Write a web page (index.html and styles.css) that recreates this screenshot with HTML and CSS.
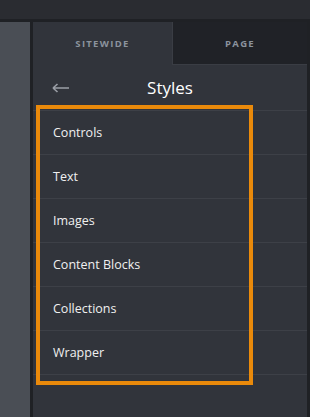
FILE: index.html
```html
<!DOCTYPE html>
<html lang="en">
<head>
  <meta charset="UTF-8">
  <meta name="viewport" content="width=device-width, initial-scale=1.0">
  <title>Styles</title>
  <link rel="stylesheet" href="styles.css">
</head>
<body>
  <div class="topbar"></div>
  <div class="main">
    <div class="side"></div>
    <div class="panel">
      <div class="tabs">
        <div class="tab active">SITEWIDE</div>
        <div class="tab">PAGE</div>
      </div>
      <div class="header">
        <svg class="back" width="18" height="10" viewBox="0 0 18 10">
          <path d="M1 5H17M1 5L5.5 1M1 5L5.5 9" stroke="#9a9ea6" stroke-width="1.6" fill="none"/>
        </svg>
        <h1>Styles</h1>
      </div>
      <ul class="list">
        <li>Controls</li>
        <li>Text</li>
        <li>Images</li>
        <li>Content Blocks</li>
        <li>Collections</li>
        <li>Wrapper</li>
      </ul>
    </div>
  </div>
  <div class="highlight"></div>
</body>
</html>
```

FILE: styles.css
```css
body {
  margin: 0;
  padding: 0;
  font-family: "Open Sans", sans-serif;
  background-color: #1f2125;
  height: 417px;
  overflow: hidden;
  display: flex;
  flex-direction: column;
}

.topbar {
  height: 19px;
  background-color: #2a2c31;
}

.main {
  flex: 1;
  display: flex;
  border-top: 3px solid #1f2125;
}

.side {
  width: 30px;
  background-color: #4a4e55;
  border-right: 3px solid #1f2125;
}

.panel {
  flex: 1;
  background-color: #31343b;
  border-right: 3px solid #1f2125;
}

.tabs {
  display: flex;
  height: 43px;
}

.tab {
  flex: 1;
  display: flex;
  justify-content: center;
  align-items: center;
  font-size: 9.5px;
  font-weight: 700;
  letter-spacing: 1.3px;
  color: #8b939d;
  background-color: #202227;
  border-left: 1px solid #3a3d44;
  border-bottom: 1px solid #3a3d44;
}

.tab.active {
  background-color: #31343b;
  border: none;
  flex: 0 0 139px;
}

.header {
  height: 45px;
  display: flex;
  align-items: center;
  justify-content: center;
  position: relative;
}

.back {
  position: absolute;
  left: 19px;
  top: 18px;
}

.header h1 {
  margin: 0;
  font-size: 17px;
  font-weight: 400;
  color: #ffffff;
}

.list {
  list-style: none;
  margin: 0;
  padding: 0;
  border-bottom: 1px solid #3d4047;
}

.list li {
  height: 43px;
  line-height: 43px;
  padding-left: 20px;
  border-top: 1px solid #3d4047;
  font-size: 12.5px;
  color: #f0f0f0;
}

.highlight {
  position: absolute;
  left: 36px;
  top: 105px;
  width: 209px;
  height: 272px;
  border: 4px solid #ea8a0b;
}
```
